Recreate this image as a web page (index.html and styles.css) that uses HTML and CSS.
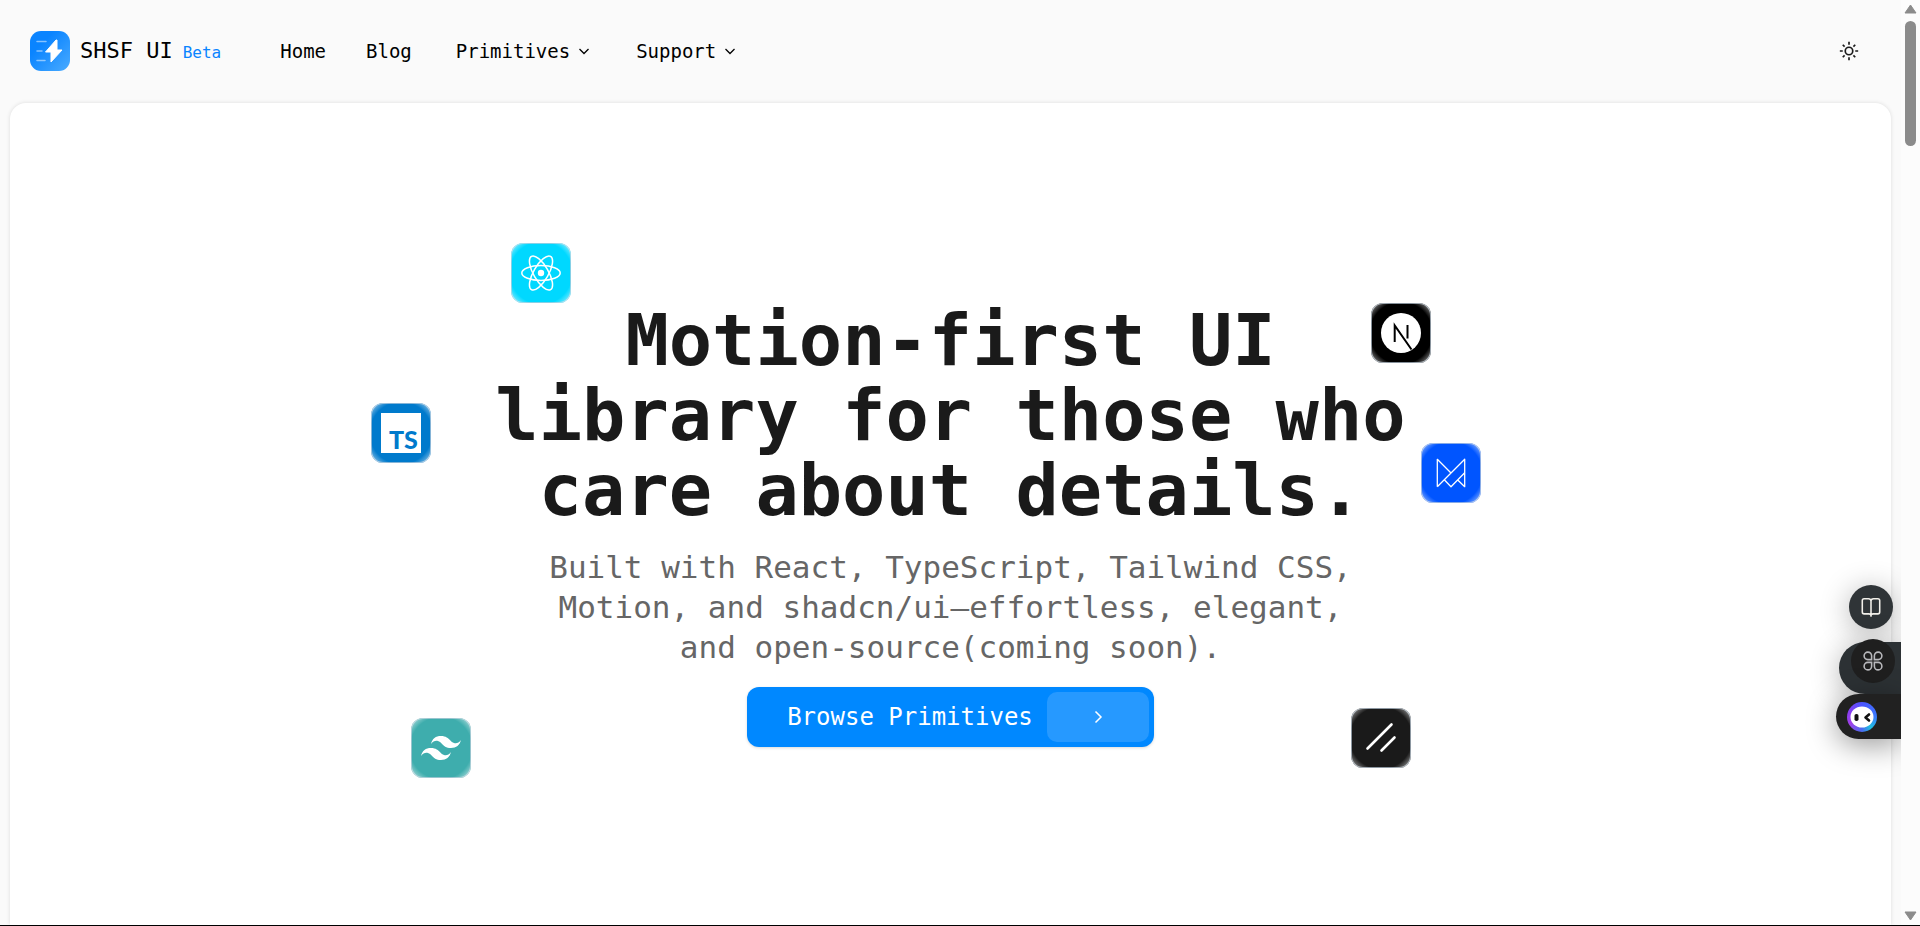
FILE: index.html
```html
<!DOCTYPE html>
<html lang="en">
<head>
<meta charset="utf-8">
<meta name="viewport" content="width=device-width, initial-scale=1">
<title>SHSF UI</title>
<link rel="stylesheet" href="styles.css">
</head>
<body>
<div class="window">
  <div class="page">
    <header class="header">
      <a class="brand" href="#">
        <svg class="brand-logo" viewBox="0 0 40 40" aria-hidden="true">
          <defs><linearGradient id="logo" x1="0" y1="0" x2="1" y2="1"><stop offset=".3" stop-color="#0a84ff"/><stop offset="1" stop-color="#4aabff"/></linearGradient></defs>
          <rect width="40" height="40" rx="11" fill="url(#logo)"/>
          <path d="M7 10.500h9M7 20h5M7 29.500h8" stroke="#fff" stroke-opacity=".5" stroke-width="1.500" stroke-linecap="round"/>
          <path d="M26 9 15.500 21H21v10L32 19h-5V9z" fill="#fff" stroke="#fff" stroke-linejoin="round"/>
        </svg>
        <span class="brand-name">SHSF UI</span>
        <span class="brand-tag">Beta</span>
      </a>
      <nav class="nav">
        <a class="nav-item" href="#">Home</a>
        <a class="nav-item" href="#">Blog</a>
        <button class="nav-item nav-menu" type="button">Primitives
          <svg class="chevron" viewBox="0 0 16 16" aria-hidden="true"><path d="m3.500 6 4.500 4.500L12.500 6"/></svg>
        </button>
        <button class="nav-item nav-menu" type="button">Support
          <svg class="chevron" viewBox="0 0 16 16" aria-hidden="true"><path d="m3.500 6 4.500 4.500L12.500 6"/></svg>
        </button>
      </nav>
      <button class="theme" type="button" aria-label="Toggle theme">
        <svg class="theme-icon" viewBox="0 0 24 24" aria-hidden="true"><circle cx="12" cy="12" r="4.500"/><path d="M12 1v3.500M12 19.500V23M1 12h3.500M19.500 12H23M4.500 4.500l2.200 2.200M17.300 17.300l2.200 2.200M4.500 19.500l2.200-2.200M17.300 6.700l2.200-2.200"/></svg>
      </button>
    </header>

    <main class="hero">
      <h1 class="hero-title">Motion-first UI<br>library for those who<br>care about details.</h1>
      <p class="hero-text">Built with React, TypeScript, Tailwind CSS,<br>Motion, and shadcn/ui—effortless, elegant,<br>and open-source(coming soon).</p>
      <a class="cta" href="#">
        <span class="cta-label">Browse Primitives</span>
        <span class="cta-arrow"><svg class="cta-icon" viewBox="0 0 20 20" aria-hidden="true"><path d="m7.500 4.500 5.500 5.500-5.500 5.500"/></svg></span>
      </a>

      <div class="tile tile-react">
        <svg viewBox="0 0 60 60" aria-hidden="true"><circle cx="30" cy="30" r="3.200" fill="#fff"/><g fill="none" stroke="#fff" stroke-width="1.500"><ellipse cx="30" cy="30" rx="19.200" ry="7.400"/><ellipse cx="30" cy="30" rx="19.200" ry="7.400" transform="rotate(60 30 30)"/><ellipse cx="30" cy="30" rx="19.200" ry="7.400" transform="rotate(120 30 30)"/></g></svg>
      </div>
      <div class="tile tile-next">
        <svg viewBox="0 0 60 60" aria-hidden="true"><circle cx="30" cy="30" r="20" fill="#fff"/><path d="M23.700 39V22.500L40.500 46.500M36.500 22v13.500" fill="none" stroke="#000" stroke-width="2"/></svg>
      </div>
      <div class="tile tile-motion">
        <svg viewBox="0 0 60 60" aria-hidden="true"><path d="M16.300 43.700V16.300L30 30M16.300 43.700 43.700 16.300V43.700L36.500 36.700M23.300 36.700 30 43.700 43.700 29.700" fill="none" stroke="#fff" stroke-width="1.300" stroke-linejoin="round"/></svg>
      </div>
      <div class="tile tile-ts">
        <svg viewBox="0 0 60 60" aria-hidden="true"><path d="M10 10h40v40H10z" fill="#fff"/><text class="ts-mark" x="18" y="46">TS</text></svg>
      </div>
      <div class="tile tile-tailwind">
        <svg viewBox="0 0 24 24" aria-hidden="true"><path transform="translate(4 4) scale(.6667)" fill="#fff" d="M12 4.800c-3.200 0-5.200 1.600-6 4.800 1.200-1.600 2.600-2.200 4.200-1.800.91.228 1.565.89 2.288 1.624C13.666 10.618 15.027 12 18 12c3.200 0 5.200-1.600 6-4.800-1.200 1.600-2.600 2.200-4.200 1.800-.91-.228-1.565-.89-2.288-1.624C16.337 6.182 14.976 4.800 12 4.800zM6 12c-3.200 0-5.200 1.600-6 4.800 1.200-1.600 2.600-2.200 4.200-1.800.91.228 1.565.89 2.288 1.624C7.666 17.818 9.027 19.200 12 19.200c3.200 0 5.200-1.600 6-4.800-1.200 1.600-2.600 2.200-4.200 1.800-.91-.228-1.565-.89-2.288-1.624C10.337 13.382 8.976 12 6 12z"/></svg>
      </div>
      <div class="tile tile-shadcn">
        <svg viewBox="0 0 60 60" aria-hidden="true"><path d="M16.500 40.500 40.500 16.500M30.500 42.500 43.500 29.500" stroke="#fff" stroke-width="2.600" stroke-linecap="round"/></svg>
      </div>
    </main>

    <aside class="dock">
      <button class="dock-read" type="button" aria-label="Reading mode">
        <svg viewBox="0 0 24 24" aria-hidden="true"><path d="M12 5.500C12 4 10.800 3 9.300 3H4.500C3.400 3 2.500 3.900 2.500 5v12.500c0 1.100.9 2 2 2h5.200c1.300 0 2.300.6 2.300 2 0-1.400 1-2 2.300-2h5.200c1.100 0 2-.9 2-2V5c0-1.100-.9-2-2-2h-4.800C13.200 3 12 4 12 5.500zM12 5.500v17"/></svg>
      </button>
      <div class="dock-tools">
        <button class="dock-apps" type="button" aria-label="Tools">
          <svg viewBox="0 0 24 24" aria-hidden="true"><path d="M10.500 10.500H6.300a4.100 4.100 0 1 1 4.200-4.200zM13.500 10.500V6.300a4.100 4.100 0 1 1 4.200 4.200zM10.500 13.500v4.200a4.100 4.100 0 1 1-4.200-4.200zM13.500 13.500h4.200a4.100 4.100 0 1 1-4.200 4.200z"/></svg>
        </button>
      </div>
      <button class="dock-chat" type="button" aria-label="Assistant">
        <span class="avatar"><svg viewBox="0 0 30 30" aria-hidden="true"><ellipse cx="15" cy="15" rx="11.500" ry="10.500" fill="#fff"/><rect x="7.500" y="12" width="4" height="7" rx="1.800" fill="#111"/><path d="m22 12.500-3.500 3 3.500 3" fill="none" stroke="#111" stroke-width="2.600" stroke-linecap="round" stroke-linejoin="round"/></svg></span>
      </button>
    </aside>
  </div>

  <div class="scrollbar" aria-hidden="true">
    <svg class="scroll-arrow" viewBox="0 0 13 10"><path d="M6.500 1 12 9H1z"/></svg>
    <div class="scroll-thumb"></div>
    <svg class="scroll-arrow scroll-down" viewBox="0 0 13 10"><path d="M6.500 9 1 1h11z"/></svg>
  </div>
</div>
</body>
</html>
```
FILE: styles.css
```css
* {
  box-sizing: border-box;
}

body {
  margin: 0;
  color: #1a1a1a;
  background: #fafafa;
  font-family: "DejaVu Sans Mono", "Liberation Mono", monospace;
}

a {
  color: inherit;
  text-decoration: none;
}

button {
  padding: 0;
  border: 0;
  color: inherit;
  background: none;
  font: inherit;
}

svg {
  display: block;
}

.window {
  display: grid;
  grid-template-columns: 1fr 19px;
  height: 100vh;
  overflow: hidden;
  border-bottom: 1px solid #000;
}

.page {
  position: relative;
  display: flex;
  flex-direction: column;
  min-width: 0;
  min-height: 0;
  padding: 0 10px;
  overflow: hidden;
}

.header {
  display: flex;
  align-items: center;
  height: 103px;
  flex-shrink: 0;
  padding: 0 32px 2px 20px;
}

.brand {
  display: flex;
  align-items: center;
  gap: 10px;
  margin-right: 39px;
}

.brand-logo {
  width: 40px;
  height: 40px;
}

.brand-name {
  color: #000;
  font-size: 22px;
}

.brand-tag {
  padding-top: 3px;
  color: #0a84ff;
  font-size: 16px;
}

.nav {
  display: flex;
  align-items: center;
}

.nav-item {
  padding: 0 20px;
  color: #000;
  font-size: 19px;
  line-height: 24px;
}

.nav-menu {
  display: flex;
  align-items: center;
  gap: 6px;
  padding-left: 24px;
}

.chevron {
  width: 16px;
  height: 16px;
  fill: none;
  stroke: currentColor;
  stroke-width: 1.3;
}

.theme {
  margin-left: auto;
}

.theme-icon {
  width: 20px;
  height: 20px;
  fill: none;
  stroke: currentColor;
  stroke-width: 2;
}

.hero {
  position: relative;
  display: flex;
  flex: 1 0 auto;
  flex-direction: column;
  align-items: center;
  padding-top: 200px;
  border-radius: 16px 16px 0 0;
  background: #fff;
  box-shadow: 0 0 4px rgba(0, 0, 0, 0.12);
  text-align: center;
}

.hero-title {
  margin: 0;
  font-size: 72px;
  font-weight: 700;
  line-height: 75px;
}

.hero-text {
  margin: 19px 0 20px;
  color: #666;
  font-size: 31px;
  line-height: 40px;
}

.cta {
  display: flex;
  align-items: center;
  gap: 14px;
  height: 60px;
  padding: 5px 5px 5px 40px;
  border-radius: 12px;
  color: #fff;
  background: #0088ff;
  box-shadow: 0 1px 3px rgba(0, 0, 0, 0.15);
  font-size: 24px;
}

.cta-arrow {
  display: grid;
  place-items: center;
  width: 102px;
  height: 50px;
  border-radius: 10px;
  background: #2699ff;
}

.cta-icon {
  width: 20px;
  height: 20px;
  fill: none;
  stroke: currentColor;
  stroke-width: 1.5;
}

/* Technology tiles float around the headline */
.tile {
  position: absolute;
  width: 60px;
  height: 60px;
  overflow: hidden;
  border-radius: 12px;
  box-shadow: inset 0 0 0 1px rgba(190, 205, 220, 0.7);
}

.tile::after {
  position: absolute;
  inset: 0;
  background: radial-gradient(circle at center, transparent 31px, rgba(255, 255, 255, 0.5) 39px);
  content: "";
}

.tile-react {
  top: 140px;
  left: calc(50% - 440px);
  background-color: #00d8ff;
}

.tile-next {
  top: 200px;
  left: calc(50% + 420px);
  background-color: #000;
}

.tile-motion {
  top: 340px;
  left: calc(50% + 470px);
  background-color: #0055ff;
}

.tile-ts {
  top: 300px;
  left: calc(50% - 580px);
  background-color: #007acc;
}

.tile-tailwind {
  top: 615px;
  left: calc(50% - 540px);
  background-color: #3eadad;
}

.tile-shadcn {
  top: 605px;
  left: calc(50% + 400px);
  background-color: #1a1a1a;
}

.ts-mark {
  fill: #007acc;
  font-family: Lato, sans-serif;
  font-size: 25px;
  font-weight: 900;
}

/* Floating tool dock on the right edge */
.dock {
  position: absolute;
  top: 585px;
  right: 0;
  display: flex;
  flex-direction: column;
  align-items: flex-end;
}

.dock-read,
.dock-apps {
  display: grid;
  place-items: center;
  width: 44px;
  height: 44px;
  border-radius: 50%;
}

.dock-read {
  margin: 0 8px 13px 0;
  color: #f2f0ea;
  background: #2f3437;
  box-shadow: 0 4px 30px rgba(0, 0, 0, 0.3);
}

.dock svg {
  fill: none;
  stroke: currentColor;
  stroke-width: 1.7;
}

.dock-read svg,
.dock-apps svg {
  width: 22px;
  height: 22px;
}

.dock-tools {
  display: flex;
  width: 62px;
  height: 52px;
  padding-left: 12px;
  border-radius: 26px 0 0 26px;
  background: #2c3134;
  box-shadow: 0 4px 30px rgba(0, 0, 0, 0.3);
}

.dock-apps {
  margin-top: -3px;
  color: #b8b8bc;
  background: #1f1f1f;
}

.dock-chat {
  display: flex;
  align-items: center;
  width: 65px;
  height: 45px;
  padding-left: 11px;
  border-radius: 23px 0 0 23px;
  background: #212121;
  box-shadow: 0 6px 30px rgba(0, 0, 0, 0.4);
}

.avatar {
  width: 30px;
  height: 30px;
  border-radius: 50%;
  background: conic-gradient(#4a55ff, #3a7bff 90deg, #20bfe0 140deg, #4a6cf0 180deg, #a040e8 240deg, #8a3df0 290deg, #4a55ff);
}

.dock .avatar svg {
  stroke: none;
}

.dock .avatar svg path {
  stroke: #111;
  stroke-width: 2.6;
}

.scrollbar {
  display: flex;
  flex-direction: column;
  align-items: center;
  gap: 7px;
  padding: 4px 0;
  background: #fcfcfc;
}

.scroll-arrow {
  width: 13px;
  height: 10px;
  fill: #8b8b8b;
  stroke: #8b8b8b;
  stroke-linejoin: round;
}

.scroll-thumb {
  width: 11px;
  height: 125px;
  border-radius: 6px;
  background: #8b8b8b;
}

.scroll-down {
  margin-top: auto;
}
```
